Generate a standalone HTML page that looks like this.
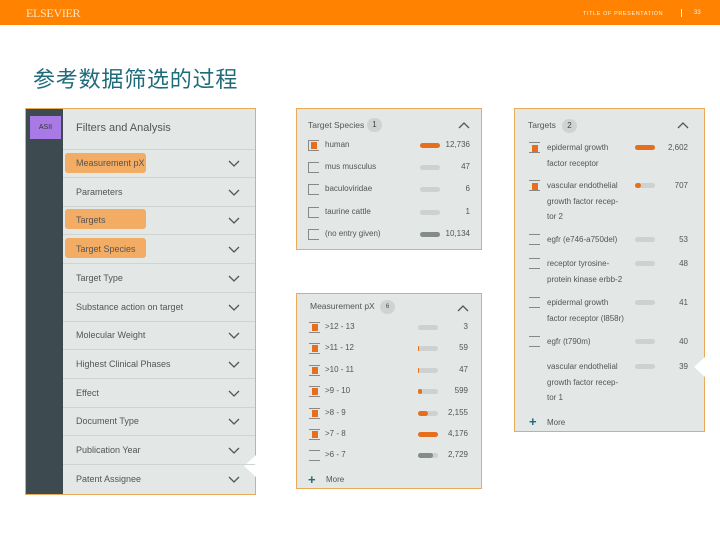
<!DOCTYPE html>
<html><head><meta charset="utf-8"><style>
*{margin:0;padding:0;box-sizing:border-box}
body{width:720px;height:540px;background:#fff;position:relative;overflow:hidden;font-family:"Liberation Sans",sans-serif}
.a{position:absolute;white-space:nowrap}
.t{position:absolute;white-space:nowrap;font-size:8px;color:#555;line-height:10px}
.pn{position:absolute;background:#e3e7e6;border:1px solid #eba95a}
.sep{position:absolute;height:1px;background:#cfd4d3}
.bar{position:absolute;height:5px;border-radius:3px;background:#cdd1d1;width:20px}
.cb{position:absolute;width:11px;height:11px;border-top:1px solid #888;border-bottom:1px solid #888}
.cbo{position:absolute;width:6px;height:7px;background:#e56f1e}
.num{position:absolute;font-size:8px;color:#555;text-align:right;width:40px;line-height:10px}
</style></head><body>
<div class="a" style="left:0;top:0;width:720px;height:25px;background:#ff8200"></div>
<div class="a" style="left:26px;top:6px;font-family:'Liberation Serif',serif;font-size:12px;color:#fbe6c6;letter-spacing:-0.3px">ELSEVIER</div>
<div class="a" style="left:583px;top:11px;font-size:5.5px;color:#fff2e0;letter-spacing:0.6px">TITLE OF PRESENTATION</div>
<div class="a" style="left:681px;top:9px;width:1px;height:8px;background:#fff2e0"></div>
<div class="a" style="left:694px;top:10px;font-size:6px;color:#fff2e0">33</div>
<div class="a" style="left:33px;top:62px;font-family:'Liberation Sans','Noto Sans CJK SC',sans-serif;font-size:22px;color:#1e6b7a;letter-spacing:0.8px">参考数据筛选的过程</div>

<div class="pn" style="left:25px;top:108px;width:231px;height:387px"></div>
<div class="a" style="left:26px;top:109px;width:37px;height:385px;background:#3d4a4f"></div>
<div class="a" style="left:30px;top:116px;width:31px;height:23px;background:#a97ae6;font-size:7px;color:#333;text-align:center;line-height:23px">ASII</div>
<div class="a" style="left:76px;top:122px;font-size:11px;color:#555">Filters and Analysis</div>
<div class="sep" style="left:63px;top:149px;width:192px"></div>
<div class="a" style="left:65px;top:153px;width:81px;height:20px;background:#f2ac64;border-radius:3px"></div>
<div class="a" style="left:65px;top:209px;width:81px;height:20px;background:#f2ac64;border-radius:3px"></div>
<div class="a" style="left:65px;top:238px;width:81px;height:20px;background:#f2ac64;border-radius:3px"></div>
<div class="a" style="left:244px;top:455px;width:0;height:0;border-top:11px solid transparent;border-bottom:11px solid transparent;border-right:12px solid #fff"></div>

<div class="pn" style="left:296px;top:108px;width:186px;height:142px"></div>
<div class="t" style="left:308px;top:120px;font-size:8.5px">Target Species</div>
<div class="a" style="left:367px;top:118px;width:15px;height:14px;border-radius:8px;background:#cfd3d3;font-size:8px;color:#444;text-align:center;line-height:14px">1</div>
<div class="pn" style="left:296px;top:293px;width:186px;height:196px"></div>
<div class="t" style="left:310px;top:301px;font-size:8.5px">Measurement pX</div>
<div class="a" style="left:380px;top:300px;width:15px;height:14px;border-radius:8px;background:#cfd3d3;font-size:6px;color:#444;text-align:center;line-height:14px">6</div>
<div class="a" style="left:308px;top:475px;font-size:13px;color:#1e6b7a;font-weight:bold;line-height:10px">+</div>
<div class="t" style="left:326px;top:475px">More</div>

<div class="pn" style="left:514px;top:108px;width:191px;height:324px"></div>
<div class="t" style="left:528px;top:120px;font-size:8.5px">Targets</div>
<div class="a" style="left:562px;top:119px;width:15px;height:14px;border-radius:8px;background:#cfd3d3;font-size:8px;color:#444;text-align:center;line-height:14px">2</div>
<div class="a" style="left:529px;top:417px;font-size:13px;color:#1e6b7a;font-weight:bold;line-height:10px">+</div>
<div class="t" style="left:547px;top:418px">More</div>
<div class="a" style="left:694px;top:357px;width:0;height:0;border-top:10px solid transparent;border-bottom:10px solid transparent;border-right:11px solid #fff"></div>

<div id="rows"></div>
<script>
var out='';
function chev(x,y,up){return '<svg class="a" style="left:'+x+'px;top:'+y+'px" width="12" height="8" viewBox="0 0 12 8"><path d="'+(up?'M1 7 L6 2 L11 7':'M1 1 L6 6 L11 1')+'" fill="none" stroke="#555" stroke-width="1.3"/></svg>';}
var L=["Measurement pX","Parameters","Targets","Target Species","Target Type","Substance action on target","Molecular Weight","Highest Clinical Phases","Effect","Document Type","Publication Year","Patent Assignee"];
for(var i=0;i<L.length;i++){var y=163+i*28.7;out+='<div class="t" style="left:76px;top:'+(y-5)+'px;font-size:9px">'+L[i]+'</div>'+chev(228,y-3);
if(i<L.length-1)out+='<div class="sep" style="left:63px;top:'+(y+14)+'px;width:192px"></div>';}
out+=chev(458,121,1)+chev(457,304,1)+chev(677,121,1);
var S=[["human",1,"#e56f1e","12,736"],["mus musculus",0,"#cdd1d1","47"],["baculoviridae",0,"#cdd1d1","6"],["taurine cattle",0,"#cdd1d1","1"],["(no entry given)",0,"#858b8b","10,134"]];
for(i=0;i<S.length;i++){var y=145+i*22.2;out+='<div class="cb" style="left:308px;top:'+(y-5)+'px;border-left:1px solid #888;border-right:0"></div>';if(S[i][1])out+='<div class="cbo" style="left:311px;top:'+(y-3)+'px"></div>';
out+='<div class="t" style="left:325px;top:'+(y-5)+'px">'+S[i][0]+'</div><div class="bar" style="left:420px;top:'+(y-2)+'px;background:'+S[i][2]+'"></div><div class="num" style="left:430px;top:'+(y-5)+'px">'+S[i][3]+'</div>';}
var M=[[">12 - 13",1,0,"3"],[">11 - 12",1,1,"59"],[">10 - 11",1,1,"47"],[">9 - 10",1,4,"599"],[">8 - 9",1,10,"2,155"],[">7 - 8",1,20,"4,176"],[">6 - 7",0,-1,"2,729"]];
for(i=0;i<M.length;i++){var y=327+i*21.4;out+='<div class="cb" style="left:309px;top:'+(y-5)+'px"></div>';if(M[i][1])out+='<div class="cbo" style="left:312px;top:'+(y-3)+'px"></div>';
out+='<div class="t" style="left:325px;top:'+(y-5)+'px">'+M[i][0]+'</div><div class="bar" style="left:418px;top:'+(y-2)+'px"></div>';
if(M[i][2]>0)out+='<div class="bar" style="left:418px;top:'+(y-2)+'px;width:'+M[i][2]+'px;background:#e56f1e"></div>';
if(M[i][2]<0)out+='<div class="bar" style="left:418px;top:'+(y-2)+'px;width:15px;background:#858b8b"></div>';
out+='<div class="num" style="left:428px;top:'+(y-5)+'px">'+M[i][3]+'</div>';}
var T=[[148,["epidermal growth","factor receptor"],1,20,"2,602"],[186,["vascular endothelial","growth factor recep-","tor 2"],1,6,"707"],[240,["egfr (e746-a750del)"],0,0,"53"],[264,["receptor tyrosine-","protein kinase erbb-2"],0,0,"48"],[303,["epidermal growth","factor receptor (l858r)"],0,0,"41"],[342,["egfr (t790m)"],0,0,"40"],[367,["vascular endothelial","growth factor recep-","tor 1"],-1,0,"39"]];
for(i=0;i<T.length;i++){var y=T[i][0];if(T[i][2]>=0)out+='<div class="cb" style="left:529px;top:'+(y-6)+'px"></div>';if(T[i][2]==1)out+='<div class="cbo" style="left:532px;top:'+(y-3)+'px"></div>';
for(var j=0;j<T[i][1].length;j++)out+='<div class="t" style="left:547px;top:'+(y-5+j*15.5)+'px">'+T[i][1][j]+'</div>';
out+='<div class="bar" style="left:635px;top:'+(y-3)+'px"></div>';if(T[i][3])out+='<div class="bar" style="left:635px;top:'+(y-3)+'px;width:'+T[i][3]+'px;background:#e56f1e"></div>';
out+='<div class="num" style="left:648px;top:'+(y-5)+'px">'+T[i][4]+'</div>';}
document.getElementById('rows').outerHTML=out;
</script>
</body></html>
